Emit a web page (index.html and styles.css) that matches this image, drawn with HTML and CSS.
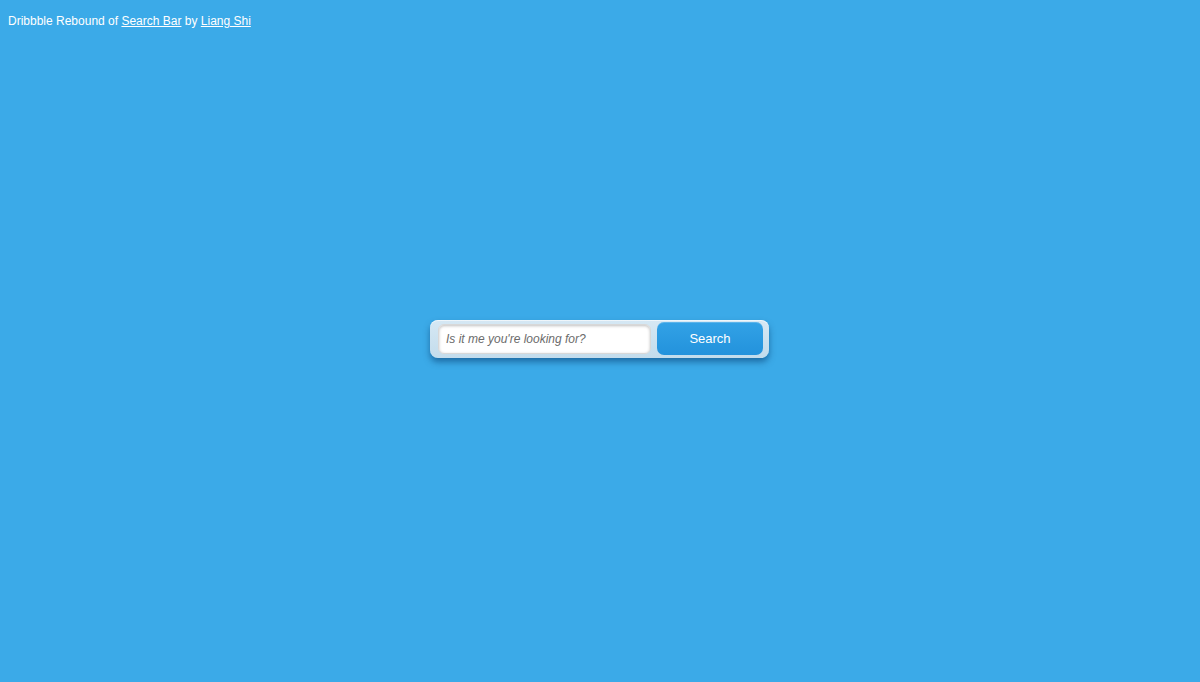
FILE: index.html
```html
<!DOCTYPE html>
<html>
<head>
<meta charset="utf-8">
<link rel="stylesheet" href="styles.css">
</head>
<body>
<p class="credit">Dribbble Rebound of <a href="#">Search Bar</a> by <a href="#">Liang Shi</a></p>
<div class="stage">
  <form class="search">
    <input class="field" type="text" placeholder="Is it me you're looking for?">
    <button class="btn" type="button">Search</button>
  </form>
</div>
</body>
</html>
```
FILE: styles.css
```css
html, body { margin: 0; padding: 0; height: 100%; }
body {
  background: #3baae8;
  font-family: "Liberation Sans", Arial, sans-serif;
  color: #fff;
  overflow: hidden;
}
.credit {
  margin: 0;
  padding: 14px 0 0 8px;
  font-size: 12px;
  line-height: 14px;
}
.credit a { color: #fff; text-decoration: underline; }
.stage {
  position: absolute;
  left: 430px;
  top: 320px;
}
.search {
  display: flex;
  align-items: flex-start;
  gap: 6px;
  width: 339px;
  height: 38px;
  box-sizing: border-box;
  padding: 2px 6px 2px 8px;
  background: linear-gradient(#d6e8f4, #c3dcec);
  border-radius: 8px;
  box-shadow: 0 4px 6px rgba(0, 50, 100, 0.5), inset 0 1px 0 rgba(255,255,255,0.6);
}
.field {
  margin-top: 2px;
  width: 213px;
  height: 30px;
  box-sizing: border-box;
  border: 1px solid #d8d8d8;
  border-radius: 6px;
  background: #fff;
  box-shadow: inset 0 1px 3px rgba(0,0,0,0.25);
  padding: 0 7px 1px;
  font-family: "Liberation Sans", Arial, sans-serif;
  font-size: 12px;
  font-style: italic;
  color: #555;
  outline: none;
}
.field::placeholder { color: #6b6b6b; font-style: italic; }
.btn {
  width: 106px;
  height: 33px;
  border: none;
  border-radius: 7px;
  background: linear-gradient(#32a2e6, #2392dc);
  color: #fff;
  font-family: "Liberation Sans", Arial, sans-serif;
  font-size: 13px;
  padding: 0 0 1px;
  box-shadow: inset 0 1px 0 rgba(255,255,255,0.2);
}
```
